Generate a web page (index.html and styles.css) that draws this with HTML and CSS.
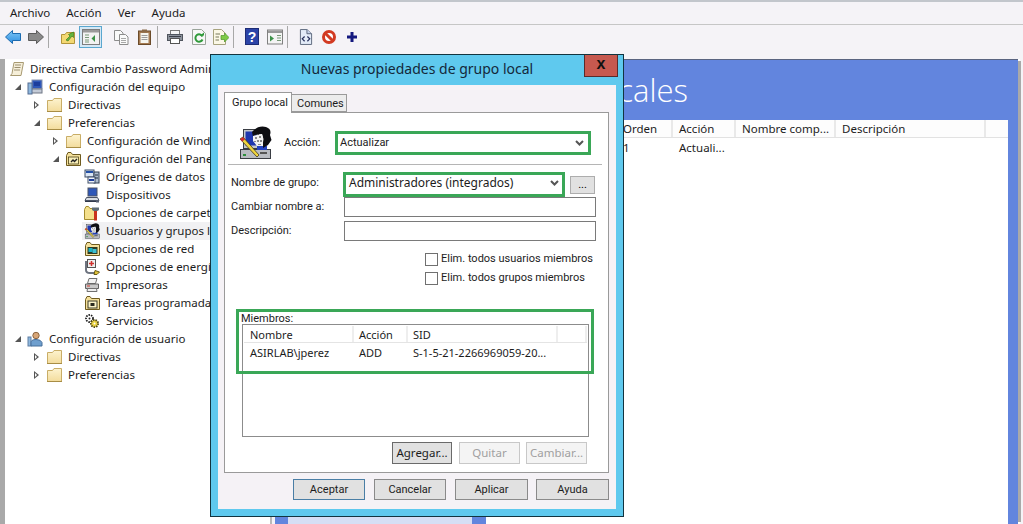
FILE: index.html
```html
<!DOCTYPE html>
<html lang="es">
<head>
<meta charset="utf-8">
<title>Editor de directivas de grupo</title>
<link rel="stylesheet" href="styles.css">
</head>
<body>
<svg class="defs" width="0" height="0">
  <defs>
    <linearGradient id="fg" x1="0" y1="0" x2="0" y2="1"><stop offset="0" stop-color="#fdf3cf"/><stop offset="1" stop-color="#f3dc9c"/></linearGradient>
    <linearGradient id="bk" x1="0" y1="0" x2="0" y2="1"><stop offset="0" stop-color="#7cc6f6"/><stop offset="1" stop-color="#2f8fe0"/></linearGradient>
    <symbol id="folder" viewBox="0 0 16 16"><path d="M1.500 3.500V14.500H15.500V1.500H8L6.500 3.500Z" fill="url(#fg)" stroke="#c9ad66"/><path d="M1 14.500H16" stroke="#a88d45"/></symbol>
    <symbol id="ofolder" viewBox="0 0 16 16"><path d="M1.500 4.500V14.500H15.500V3.500H7.500L6 1.500H3Z" fill="#f4e09a" stroke="#6e5a1e"/><rect x="3.500" y="6" width="10" height="7" fill="#f8eeb8" stroke="#4d4217" stroke-width=".8"/><path d="M6 11L8 9L9.500 10.500L12 8" fill="none" stroke="#222" stroke-width="1.400"/></symbol>
    <symbol id="scroll" viewBox="0 0 16 16"><path d="M5 1.500H14.500L12 14.500H1.500L3 12.500Z" fill="#f6efd9" stroke="#a89a72"/><path d="M6 4H12M5.500 6.500H11.500M5 9H11" stroke="#9b8f70"/></symbol>
    <symbol id="computer" viewBox="0 0 16 16"><rect x="5" y="1" width="10" height="8.500" fill="#2e57b8" stroke="#8793ad"/><rect x="7" y="3" width="6" height="4" fill="#1c3d9c"/><rect x="2" y="10" width="13" height="4" fill="#c3cad6" stroke="#6f7785"/><rect x="1" y="4" width="4" height="11" fill="#8fb8de" stroke="#546d92"/></symbol>
    <symbol id="user" viewBox="0 0 16 16"><rect x="1" y="6" width="3" height="9" fill="#8fb8de" stroke="#5f7ea3"/><circle cx="9" cy="4.500" r="3.200" fill="#d7a577" stroke="#8c6540"/><path d="M4 15V11.500Q4 8.500 9 8.500T15 11.500V15Z" fill="#6f9fce" stroke="#476e9a"/></symbol>
    <symbol id="sources" viewBox="0 0 16 16"><rect x="1" y="1" width="9" height="7" fill="#dbe6f3" stroke="#3c4d66"/><rect x="2" y="2" width="7" height="2" fill="#2350a8"/><rect x="10" y="3" width="5" height="11" fill="#aebccd" stroke="#2f3c50"/><rect x="4" y="8" width="7" height="6" fill="#eef2f7" stroke="#3c4d66"/><rect x="5" y="10" width="5" height="2" fill="#1c3d9c"/><path d="M11 6H14M11 9H14" stroke="#1f2a3a"/></symbol>
    <symbol id="device" viewBox="0 0 16 16"><rect x="4" y="1" width="9" height="8" fill="#2e57b8" stroke="#4c5566"/><path d="M2.500 10.500H13.500L15 13.500H1Z" fill="#d9dde3" stroke="#4c5566"/><path d="M1 14.500H13" stroke="#30384a"/><rect x="12" y="13" width="3" height="2.500" fill="#565f70"/></symbol>
    <symbol id="fopts" viewBox="0 0 16 16"><path d="M.5 4.500V14.500H11.500V3.500H6L4.500 1.500H2Z" fill="#f4e08c" stroke="#a48c2e"/><path d="M8 2.500H15V5L12.500 6.500H10.500L8 5Z" fill="#5f6d77"/><rect x="10" y="6" width="3" height="9.500" fill="#c8331f"/></symbol>
    <symbol id="net" viewBox="0 0 16 16"><path d="M1.500 4.500V14.500H15.500V3.500H7.500L6 1.500H3Z" fill="#f4e09a" stroke="#6e5a1e"/><rect x="3.500" y="6" width="10" height="7" fill="#2d3a22"/><rect x="4.500" y="7" width="4" height="4" fill="#1ab2c5"/><rect x="8.500" y="8" width="4" height="4" fill="#3fbfd0"/></symbol>
    <symbol id="power" viewBox="0 0 16 16"><rect x="3.500" y=".5" width="8" height="8" fill="#eee" stroke="#555"/><path d="M7.500 2V7M5 4.500H10" stroke="#d0312d" stroke-width="1.500"/><path d="M2 2V11Q2 14 6 14H12" fill="none" stroke="#6e7480" stroke-width="2"/><path d="M11 11.500L15.500 13 13 15.500H10Z" fill="#e0c33b" stroke="#6b5c14"/></symbol>
    <symbol id="printer" viewBox="0 0 16 16"><path d="M5 1.500H13L11.500 6.500H3.500Z" fill="#f2f2f2" stroke="#6f6f6f"/><path d="M1.500 7H14.500V11.500H1.500Z" fill="#c8c8c8" stroke="#606060"/><path d="M3.500 11.500H12.500L13 14.500H3Z" fill="#eee" stroke="#707070"/><path d="M3 9H6" stroke="#d23a2f"/></symbol>
    <symbol id="tasks" viewBox="0 0 16 16"><path d="M1.500 4.500V14.500H15.500V3.500H7.500L6 1.500H3Z" fill="#f4e09a" stroke="#6e5a1e"/><rect x="4" y="6" width="9" height="7" fill="#fbf3c8" stroke="#3c3c2c"/><rect x="6.500" y="8" width="4" height="3" fill="#2b2b20"/></symbol>
    <symbol id="gears" viewBox="0 0 16 16"><circle cx="5.500" cy="5.500" r="3.500" fill="#fff" stroke="#222" stroke-width="1.800" stroke-dasharray="1.500 1"/><circle cx="5.500" cy="5.500" r="1" fill="#222"/><circle cx="10.500" cy="10.500" r="3.600" fill="#e9d243" stroke="#4c4413" stroke-width="1.800" stroke-dasharray="1.500 1"/><circle cx="10.500" cy="10.500" r="1" fill="#fff"/></symbol>
    <symbol id="person" viewBox="0 0 34 34">
      <rect x="2.500" y="23.500" width="30" height="9" fill="#b9bcc2" stroke="#3a3d44"/>
      <rect x="22" y="26" width="7" height="2" fill="#555"/><rect x="5" y="28" width="3" height="2" fill="#2d8f3d"/>
      <rect x="5.500" y="3.500" width="15" height="19" fill="#c4c7cc" stroke="#3a3d44"/>
      <rect x="7.500" y="5.500" width="11" height="14" fill="#1f37b0"/>
      <path d="M19 24V20H29V24Z" fill="#2443c0"/>
      <path d="M14 6Q20 -1 28 1Q34 3 32 9L33.500 14L30 19L25 22L25 12L24 8L17 9L15 11Z" fill="#0e0e12"/>
      <path d="M15 10L24 8L25.500 13L24.500 20H19L15 15Z" fill="#f2f2f2"/>
      <path d="M17 11h2v2h-2zM21 10h2v2h-2zM19 14h2v2h-2zM22 14h2v2h-2zM16 15h2v1h-2zM20 18h3v1h-3z" fill="#8a8a8a"/>
      <path d="M2 13L5 11L21 29L19 31Z" fill="#efd43d" stroke="#40391a" stroke-width=".8"/>
      <path d="M2 13L5 11L7 13.500L4 15.500Z" fill="#cf2e2e"/>
    </symbol>
    <symbol id="chev" viewBox="0 0 9 6"><path d="M1 1L4.500 4.500L8 1" fill="none" stroke="#555" stroke-width="2"/></symbol>
  </defs>
</svg>

<nav class="menubar"><span class="mi mi-a">Archivo</span><span class="mi mi-b">Acción</span><span class="mi mi-c">Ver</span><span class="mi">Ayuda</span></nav>

<div class="toolbar">
  <svg class="ti t16" viewBox="0 0 16 14"><path d="M7.500 .5L.5 7L7.500 13.500V10.500H15.500V3.500H7.500Z" fill="url(#bk)" stroke="#1c6bb0"/></svg>
  <svg class="ti t16 g7" viewBox="0 0 16 14"><path d="M8.500 .5L15.500 7L8.500 13.500V10.500H.5V3.500H8.500Z" fill="#8a8a8a" stroke="#5b5b5b"/></svg>
  <i class="sep s1"></i>
  <svg class="ti t16 g11" viewBox="0 0 16 16"><path d="M1.500 5.500V14.500H14.500V3.500H6.500L5 5.500Z" fill="#f3d873" stroke="#b2953a"/><path d="M6 11L10 7L8.500 5.500L13.500 3L13.500 8.500L12 7L8 12Z" fill="#65b53d" stroke="#3f7f22" stroke-width=".7"/></svg>
  <span class="tbtn"><svg class="t18" viewBox="0 0 18 16"><rect x=".5" y=".5" width="17" height="15" fill="#f2f2f2" stroke="#7d7d7d"/><rect x="1" y="1" width="16" height="2.500" fill="#9a9a9a"/><path d="M3 6H7M3 8.500H7M3 11H7M3 13H7" stroke="#789978"/><path d="M13 6V13L9.500 9.500Z" fill="#3c9148"/></svg></span>
  <svg class="ti t16 g11" viewBox="0 0 16 16"><path d="M1.500 1.500H7.500L10 4V11.500H1.500Z" fill="#fafafa" stroke="#8c8c8c"/><path d="M6.500 5.500H12.500L15 8V15.500H6.500Z" fill="#fafafa" stroke="#8c8c8c"/><path d="M8 9.500H13M8 11.500H13M8 13.500H13" stroke="#a8a8a8"/></svg>
  <svg class="ti t13 g9" viewBox="0 0 13 16"><rect x=".5" y="2" width="12" height="13.500" fill="#a57b52" stroke="#6b4b2a"/><rect x="2.500" y="4" width="8" height="10" fill="#f6f6f0"/><rect x="4" y=".5" width="5" height="3" fill="#8a6a48"/><path d="M3.500 6.500H9.500M3.500 8.500H9.500M3.500 10.500H9.500" stroke="#9c9c9c"/></svg>
  <i class="sep s2"></i>
  <svg class="ti t16 g9" viewBox="0 0 16 16"><rect x="3.500" y="1.500" width="9" height="5" fill="#f5f5f5" stroke="#777"/><rect x=".5" y="5.500" width="15" height="6" fill="#8b919b" stroke="#50555e"/><rect x="3.500" y="9.500" width="9" height="5" fill="#fff" stroke="#555"/><rect x="2" y="7" width="12" height="1" fill="#3b3f47"/></svg>
  <svg class="ti t14 g9" viewBox="0 0 14 16"><path d="M.5.500H9.500L13.500 4.500V15.500H.5Z" fill="#f7f7f7" stroke="#9aa49a"/><path d="M10.500 7.500A3.700 3.700 0 1 0 10.500 10.500" fill="none" stroke="#2f9a3a" stroke-width="2"/><path d="M8 6.500H12V3.500Z" fill="#2f9a3a"/></svg>
  <svg class="ti t16 g7" viewBox="0 0 16 16"><path d="M.5.500H8.500L12.500 4.500V15.500H.5Z" fill="#fbf8e6" stroke="#a7a37e"/><path d="M2.500 5H7M2.500 8H6M2.500 11H6" stroke="#77775a"/><path d="M8 6.500H11.500V4L16 8.500L11.500 13V10.500H8Z" fill="#7ecb45" stroke="#4f952a" stroke-width=".7"/></svg>
  <i class="sep s3"></i>
  <svg class="ti t13b g11" viewBox="0 0 14 17"><rect x=".5" y=".5" width="13" height="16" fill="#2c44a8" stroke="#1d2c75"/><text class="qm" x="7" y="13.500">?</text></svg>
  <svg class="ti t16 g8" viewBox="0 0 16 15"><rect x=".5" y=".5" width="15" height="14" fill="#f4f4f4" stroke="#808080"/><rect x="1" y="1" width="14" height="2.500" fill="#999"/><path d="M10 6H14M10 8.500H14M10 11H14" stroke="#789978"/><path d="M3 6V12L7 9Z" fill="#3c9148"/></svg>
  <i class="sep s4"></i>
  <svg class="ti t14 g11" viewBox="0 0 15 17"><path d="M1.500.5H8.500L13.500 5V16.500H1.500Z" fill="#e3ebf8" stroke="#59647a"/><path d="M8.500.5V5H13.500" fill="#c5d2ea" stroke="#59647a"/><path d="M6 8L3.500 10.500L6 13M9 8L11.500 10.500L9 13" fill="none" stroke="#27305c" stroke-width="1.300"/></svg>
  <svg class="ti t14 g9" viewBox="0 0 14 14"><circle cx="7" cy="7" r="5.500" fill="#fff" stroke="#d23a22" stroke-width="3"/><path d="M3.500 3.500L10.500 10.500" stroke="#d23a22" stroke-width="3"/></svg>
  <svg class="ti t10 g11" viewBox="0 0 10 10"><path d="M3.500 0H6.500V3.500H10V6.500H6.500V10H3.500V6.500H0V3.500H3.500Z" fill="#14187e"/></svg>
</div>

<main class="main">
  <aside class="tree">
    <div class="row l0"><svg class="ic"><use href="#scroll"/></svg>Directiva Cambio Password Administradores</div>
    <div class="row l1"><b class="ar open"></b><svg class="ic"><use href="#computer"/></svg>Configuración del equipo</div>
    <div class="row l2"><b class="ar"></b><svg class="ic"><use href="#folder"/></svg>Directivas</div>
    <div class="row l2"><b class="ar open"></b><svg class="ic"><use href="#folder"/></svg>Preferencias</div>
    <div class="row l3"><b class="ar"></b><svg class="ic"><use href="#folder"/></svg>Configuración de Windows</div>
    <div class="row l3"><b class="ar open"></b><svg class="ic"><use href="#ofolder"/></svg>Configuración del Panel de control</div>
    <div class="row l4"><b class="ar none"></b><svg class="ic"><use href="#sources"/></svg>Orígenes de datos</div>
    <div class="row l4"><b class="ar none"></b><svg class="ic"><use href="#device"/></svg>Dispositivos</div>
    <div class="row l4"><b class="ar none"></b><svg class="ic"><use href="#fopts"/></svg>Opciones de carpeta</div>
    <div class="row l4"><b class="ar none"></b><span class="sel"><svg class="ic"><use href="#person"/></svg>Usuarios y grupos locales</span></div>
    <div class="row l4"><b class="ar none"></b><svg class="ic"><use href="#net"/></svg>Opciones de red</div>
    <div class="row l4"><b class="ar none"></b><svg class="ic"><use href="#power"/></svg>Opciones de energía</div>
    <div class="row l4"><b class="ar none"></b><svg class="ic"><use href="#printer"/></svg>Impresoras</div>
    <div class="row l4"><b class="ar none"></b><svg class="ic"><use href="#tasks"/></svg>Tareas programadas</div>
    <div class="row l4"><b class="ar none"></b><svg class="ic"><use href="#gears"/></svg>Servicios</div>
    <div class="row l1"><b class="ar open"></b><svg class="ic"><use href="#user"/></svg>Configuración de usuario</div>
    <div class="row l2"><b class="ar"></b><svg class="ic"><use href="#folder"/></svg>Directivas</div>
    <div class="row l2"><b class="ar"></b><svg class="ic"><use href="#folder"/></svg>Preferencias</div>
  </aside>
  <section class="pane">
    <h1 class="pane-title">Usuarios y grupos locales</h1>
    <div class="pane-body">
      <div class="side"></div>
      <div class="table">
        <div class="thead"><span class="c c-o">Orden</span><span class="c c-a">Acción</span><span class="c c-n">Nombre comp...</span><span class="c c-d">Descripción</span></div>
        <div class="tr"><span class="c c-o">1</span><span class="c c-a">Actuali...</span></div>
      </div>
    </div>
  </section>
</main>

<div class="dialog">
  <header class="dlg-title"><span class="dlg-name">Nuevas propiedades de grupo local</span><span class="close">x</span></header>
  <div class="dlg-body">
    <div class="tabs"><span class="tab on">Grupo local</span><span class="tab off-tab">Comunes</span></div>
    <div class="panel">
      <div class="action-row">
        <svg class="big"><use href="#person"/></svg>
        <span class="lbl-act">Acción:</span>
        <div class="combo hl c-act"><span>Actualizar</span><svg class="chev"><use href="#chev"/></svg></div>
      </div>
      <hr class="rule">
      <div class="frow f-group"><label class="fl">Nombre de grupo:</label><div class="combo hl c-grp"><span>Administradores (integrados)</span><svg class="chev"><use href="#chev"/></svg></div><button class="dots">...</button></div>
      <div class="frow f-tight"><label class="fl">Cambiar nombre a:</label><input class="inp" type="text"></div>
      <div class="frow f-desc"><label class="fl">Descripción:</label><input class="inp" type="text"></div>
      <div class="checks">
        <label class="chk"><i class="box"></i>Elim. todos usuarios miembros</label>
        <label class="chk"><i class="box"></i>Elim. todos grupos miembros</label>
      </div>
      <div class="members">
        <div class="m-label">Miembros:</div>
        <div class="mlist">
          <div class="mhead"><span class="m1">Nombre</span><span class="m2">Acción</span><span class="m3">SID</span><span class="m4"></span></div>
          <div class="mrow"><span class="m1">ASIRLAB\jperez</span><span class="m2">ADD</span><span class="m3">S-1-5-21-2266969059-20...</span></div>
        </div>
        <i class="hl-box"></i>
        <div class="mbtns"><button class="btn add">Agregar...</button><button class="btn off">Quitar</button><button class="btn off">Cambiar...</button></div>
      </div>
    </div>
    <div class="foot"><button class="btn ok">Aceptar</button><button class="btn">Cancelar</button><button class="btn wide">Aplicar</button><button class="btn wide last">Ayuda</button></div>
  </div>
</div>
</body>
</html>
```

FILE: styles.css
```css
* { box-sizing: border-box; }
html, body { margin: 0; height: 100%; }
body {
  display: flex; flex-direction: column; height: 524px; width: 1023px; overflow: hidden;
  background: #f5f3f7; color: #1c1c1c;
  font: 11.5px/16px "Noto Sans", "Open Sans", sans-serif;
  border-top: 2px solid #c2c6cc;
}
.defs { position: absolute; }
.menubar { display: flex; height: 23px; padding: 3px 0 0 10px; border-bottom: 1px solid #c6c6c6; }
.mi-a { margin-right: 16px; } .mi-b { margin-right: 16px; } .mi-c { margin-right: 16px; }
.toolbar { display: flex; align-items: center; height: 31px; padding: 0 0 8px 5px; }
.ti { display: block; flex: none; }
.t16 { width: 16px; height: 16px; } .t18 { width: 18px; height: 16px; display: block; }
.t14 { width: 14px; height: 16px; } .t13 { width: 13px; height: 16px; }
.t13b { width: 14px; height: 17px; } .t10 { width: 10px; height: 10px; }
.g7 { margin-left: 7px; } .g8 { margin-left: 8px; } .g9 { margin-left: 9px; } .g11 { margin-left: 11px; }
.sep { width: 1px; height: 22px; background: #a8a8a8; flex: none; }
.s1 { margin-left: 4px; } .s2 { margin-left: 6px; } .s3 { margin-left: 4px; } .s4 { margin-left: 4px; }
.tbtn { display: flex; align-items: center; justify-content: center; width: 23px; height: 22px; margin-left: 3px; background: #d5e8f5; border: 1px solid #5aa7cf; }
.qm { font: bold 14px "Liberation Sans", sans-serif; fill: #fff; text-anchor: middle; }

.main { flex: 1; display: flex; min-height: 0; padding-top: 3px; }
.tree { width: 272px; flex: none; height: 100%; overflow: hidden; background: #fff; border-left: 5px solid #a9a9a9; border-right: 2px solid #b9b9b9; padding-top: 1px; }
.row { display: flex; align-items: center; height: 18px; white-space: nowrap; }
.l0 { padding-left: 4px; } .l1 { padding-left: 8px; } .l2 { padding-left: 27px; } .l3 { padding-left: 46px; } .l4 { padding-left: 65px; }
.l0 .ic { margin-right: 5px; }
.ic { width: 16px; height: 16px; flex: none; margin-right: 6px; }
.ar { width: 14px; height: 18px; flex: none; position: relative; }
.ar::before { content: ""; position: absolute; left: 2px; top: 5px; border-left: 5px solid #555; border-top: 4px solid transparent; border-bottom: 4px solid transparent; }
.ar::after { content: ""; position: absolute; left: 3px; top: 7px; border-left: 2px solid #fff; border-top: 2px solid transparent; border-bottom: 2px solid transparent; }
.ar.open::before { left: 2px; top: 6px; border: 0; border-right: 6px solid #555; border-top: 6px solid transparent; }
.ar.open::after { display: none; }
.ar.none::before, .ar.none::after { display: none; }
.sel { display: flex; align-items: center; height: 18px; margin-left: -2px; padding-left: 2px; padding-right: 40px; background: #f1f1f3; }

.pane { flex: 1; min-width: 0; height: 100%; margin-left: 3px; margin-right: 5px; background: #6285de; border-top: 1px solid #5a6480; display: flex; flex-direction: column; box-shadow: 5px 0 0 -2px #a9a9a9, 2px 0 0 #fff; }
.pane-title { margin: 0; height: 60px; padding: 10px 0 0 59px; font: 300 31px/40px "Open Sans", sans-serif; color: #fff; white-space: nowrap; overflow: hidden; }
.pane-body { flex: 1; display: flex; min-height: 0; padding-left: 13px; }
.side { width: 184px; background: #d6dff5; margin-right: 14px; }
.table { width: 522px; background: #fff; }
.thead { display: flex; height: 18px; border-bottom: 1px solid #e2e2e2; background: #fdfdfd; }
.tr { display: flex; height: 20px; align-items: center; }
.c { display: block; padding-left: 6px; line-height: 18px; white-space: nowrap; }
.thead .c { border-right: 2px solid #e9e9e9; height: 17px; }
.c-o { width: 187px; padding-left: 137px; } .c-a { width: 63px; } .c-n { width: 100px; } .c-d { width: 150px; }

.dialog { position: absolute; left: 210px; top: 54px; width: 414px; height: 463px; background: #5fc9ee; border: 1px solid #12343f; display: flex; flex-direction: column; font-family: Roboto, "Noto Sans", sans-serif; font-size: 11px; }
.dlg-title { flex: none; height: 30px; display: flex; justify-content: center; padding-top: 5px; font: 14px/18px "Noto Sans", sans-serif; color: #14283a; }
.close { position: absolute; right: 5px; top: 0; width: 34px; height: 22px; background: #c6594f; border: 1px solid #5a2b2b; border-top: 0; font: bold 16px/17px "Liberation Sans", sans-serif; text-align: center; color: #111; }
.dlg-body { flex: 1; margin: 0 7px 7px; background: #f5f2f6; padding: 7px 6px 0; display: flex; flex-direction: column; min-height: 0; }
.tabs { display: flex; height: 20px; align-items: flex-end; }
.tab { display: block; height: 18px; padding: 1px 0 0 5px; background: #ececec; border: 1px solid #9a9a9a; border-left: 0; line-height: 16px; white-space: nowrap; }
.off-tab { width: 55px; }
.tab.on { height: 21px; width: 68px; padding: 2px 0 0 7px; background: #fff; border-left: 1px solid #9a9a9a; border-bottom: 0; margin-bottom: -1px; position: relative; z-index: 1; }
.panel { height: 361px; width: 385px; background: #fff; border: 1px solid #9a9a9a; padding: 0 3px; display: flex; flex-direction: column; }
.action-row { display: flex; align-items: center; height: 51px; padding: 9px 0 0 10px; }
.big { width: 34px; height: 34px; margin-right: 12px; flex: none; }
.lbl-act { width: 51px; }
.combo { display: flex; align-items: center; justify-content: space-between; background: #fff; }
.hl { border: 3px solid #3aa757; }
.c-act { width: 256px; height: 24px; padding: 0 4px 0 2px; }
.c-grp { width: 222px; height: 25px; padding: 0 3px 3px 3px; margin-left: -1px; font: 12px/16px "Noto Sans", sans-serif; }
.chev { width: 9px; height: 6px; flex: none; }
.rule { width: 374px; margin: 0; height: 1px; border: 0; background: #b5b5b5; }
.frow { display: flex; align-items: center; }
.f-group { margin-top: 7px; height: 25px; }
.f-group .fl { padding-bottom: 3px; }
.f-tight { height: 20px; }
.f-desc { height: 20px; margin-top: 4px; }
.fl { width: 116px; padding-left: 3px; flex: none; }
.dots { width: 25px; height: 18px; margin-left: 5px; padding: 0; font: inherit; line-height: 12px; background: #e1e1e1; border: 1px solid #adadad; }
.inp { width: 252px; height: 20px; border: 1px solid #7a7a7a; background: #fff; padding: 0; }
.checks { display: flex; flex-direction: column; gap: 3px; padding: 10px 0 0 197px; }
.chk { display: flex; align-items: center; height: 16px; white-space: nowrap; }
.box { width: 13px; height: 13px; border: 1px solid #707070; margin-right: 3px; background: #fff; flex: none; }
.members { position: relative; margin-top: 23px; padding-left: 14px; }
.m-label { height: 15px; line-height: 15px; margin-top: 2px; margin-left: -1px; }
.mlist { width: 347px; height: 113px; margin-top: -2px; border: 1px solid #8c8c8c; padding: 1px 1px 0; font-family: "Noto Sans", sans-serif; }
.mhead { display: flex; height: 17px; border-bottom: 1px solid #e4e4e4; }
.mhead span { border-right: 2px solid #eee; line-height: 17px; }
.mrow { display: flex; height: 19px; line-height: 19px; }
.m1 { width: 110px; padding-left: 6px; flex: none; } .m2 { width: 54px; padding-left: 5px; flex: none; } .m3 { width: 150px; padding-left: 5px; flex: none; white-space: nowrap; } .m4 { width: 30px; }
.hl-box { position: absolute; left: 8px; top: 0; width: 358px; height: 65px; border: 3px solid #3aa757; }
.btn { font: inherit; width: 72px; height: 22px; padding: 0; background: #e1e1e1; border: 1px solid #8a8a8a; color: #1c1c1c; }
.mbtns { display: flex; justify-content: flex-end; gap: 6px; width: 345px; margin-top: 5px; font: 11.500px/16px "Noto Sans", sans-serif; }
.mbtns .btn { width: 61px; }
.mbtns .add { width: 60px; margin-right: 1px; border-color: #6a6a6a; }
.btn.off { background: #f4f4f4; border-color: #c8c8c8; color: #a0a0a0; }
.foot { display: flex; gap: 9px; justify-content: flex-end; margin-top: 6px; height: 22px; width: 385px; }
.foot .btn { height: 21px; }
.foot .wide { width: 73px; }
.foot .last { margin-left: -1px; }
.btn.ok { border-color: #4a7ea5; }
```
